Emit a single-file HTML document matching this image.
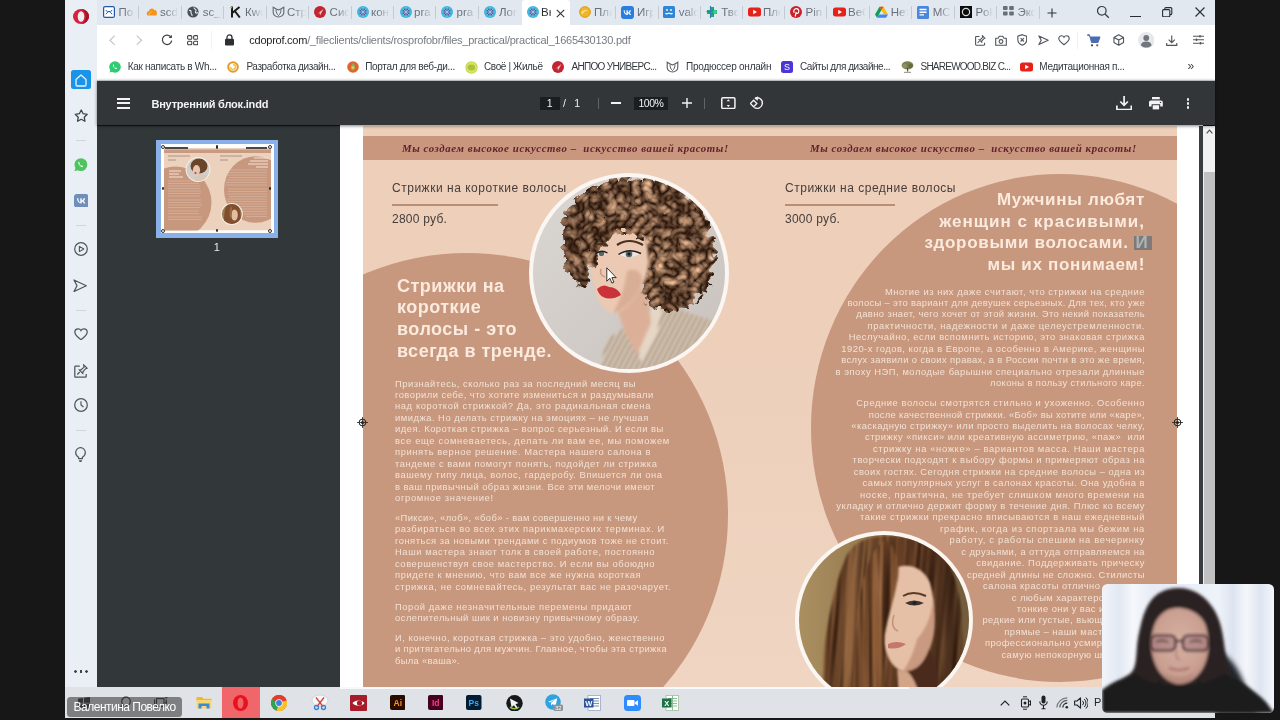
<!DOCTYPE html>
<html lang="ru">
<head>
<meta charset="utf-8">
<title>Внутренний блок.indd</title>
<style>
*{box-sizing:border-box;margin:0;padding:0}
html,body{width:1280px;height:720px;overflow:hidden;background:#171717;font-family:"Liberation Sans",sans-serif;}
#root{position:absolute;left:0;top:0;width:1280px;height:720px;overflow:hidden;background:#171717;filter:blur(0.45px);}
.abs{position:absolute}
/* browser chrome */
#tabbar{position:absolute;left:65px;top:0;width:1150px;height:25px;background:#e1e8f0;}
#opside{position:absolute;left:65px;top:0;width:32px;height:688px;background:#e9eff4;}
#addr{position:absolute;left:97px;top:25px;width:1118px;height:29px;background:#fff;}
#bmk{position:absolute;left:97px;top:54px;width:1118px;height:26px;background:#fff;}
.tab{position:absolute;top:0;height:25px;font-size:11px;color:#5a6270;white-space:nowrap;overflow:hidden}
.tab .ic{position:absolute;left:3px;top:5px;width:14px;height:14px;border-radius:3px}
.tab .tx{position:absolute;left:20px;top:6px;width:17px;overflow:hidden;-webkit-mask-image:linear-gradient(90deg,#000 55%,transparent);}
.tsep{position:absolute;top:6px;width:1px;height:13px;background:#c3cad4}
.bm{position:absolute;top:0;height:26px;font-size:10px;color:#34393f;white-space:nowrap;line-height:25px}
.bmi{position:absolute;top:6px;width:13px;height:13px;border-radius:50%}
/* pdf viewer */
#pdfbar{position:absolute;left:97px;top:80px;width:1118px;height:45px;background:#323639;box-shadow:0 1px 3px rgba(0,0,0,.5);z-index:5}
#pdfside{position:absolute;left:97px;top:126px;width:243px;height:562px;background:#323839;}
#view{position:absolute;left:340px;top:125px;width:863px;height:563px;background:#fff;overflow:hidden}
#vshadow{position:absolute;left:1199px;top:126px;width:4px;height:562px;background:#3a3d40}
#scroll{position:absolute;left:1203px;top:126px;width:12px;height:562px;background:#f1f1f1}
#taskbar{position:absolute;left:65px;top:687px;width:1150px;height:31.300px;background:#dfe3e7;}

/* page art : origin global (361,126) */
#art{position:absolute;left:21px;top:1px;width:816px;height:562px;background:linear-gradient(180deg,#edcfba 0%,#edcfba 35%,#efd5c2 100%);overflow:hidden}
#art .band{position:absolute;left:0;top:9.600px;width:816px;height:24.700px;background:#c8977e}
#art .circ{position:absolute;border-radius:50%;background:#c8987e}
.script{position:absolute;top:10.300px;height:25px;line-height:25px;font-family:"Liberation Serif",serif;font-style:italic;font-weight:bold;font-size:10.800px;color:#64202f;white-space:nowrap;letter-spacing:.61px;text-align:left}
.svc{position:absolute;font-size:12px;color:#463d3a;white-space:nowrap;letter-spacing:.52px}
.rule{position:absolute;height:2.300px;background:#b98d76}
.h{position:absolute;font-weight:bold;font-size:18px;line-height:21.65px;color:#fbeade;white-space:nowrap;letter-spacing:.5px}
.h.pr{font-size:17px;letter-spacing:.7px}
.p{position:absolute;font-size:9.4px;line-height:11.45px;color:#f3e1d4;white-space:nowrap;letter-spacing:.52px}
.p.pr{letter-spacing:.44px;overflow:hidden}
.p div{height:11.45px}
.p .gap{height:8.55px}
.pr{text-align:right}
.reg{position:absolute;width:11px;height:11px}
</style>
</head>
<body>
<div id="root">
  <div id="tabbar">
<div class="abs" style="left:457.300px;top:0;width:48px;height:25px;background:#fff;border-radius:3px 3px 0 0"></div>
<div class="abs" style="left:37.7px;top:6px;width:13px;height:13px;line-height:0"><svg width="12" height="12" viewBox="0 0 12 12"><rect x=".6" y=".6" width="10.8" height="10.8" rx="1.5" fill="#fff" stroke="#2458a6" stroke-width="1.2"/><path d="M2.8 4l2 2.2L6 5l1.2 1.2 2-2.2M2.8 8.2L4.8 6.2M9.2 8.2L7.2 6.2" stroke="#2458a6" stroke-width="1" fill="none"/></svg></div>
<div class="abs" style="left:53.4px;top:5px;width:17px;height:15px;line-height:15px;font-size:11.5px;color:#69707b;overflow:hidden;white-space:nowrap;-webkit-mask-image:linear-gradient(90deg,#000 35%,rgba(0,0,0,0) 100%);">По</div>
<div class="tsep" style="left:73.3px"></div>
<div class="abs" style="left:80.8px;top:6px;width:13px;height:13px;line-height:0"><svg width="12" height="12" viewBox="0 0 12 12"><path d="M1.5 9.5C0 8 1 5.2 3 5c.3-2.4 3.6-3.4 5-1.200C10.500 4 11.800 6.500 10.500 9.500Z" fill="#f7941e"/><path d="M3.500 9.500c-1-1.500 0-3.500 2-3.500" stroke="#fbb65a" stroke-width="1" fill="none"/></svg></div>
<div class="abs" style="left:95.0px;top:5px;width:18px;height:15px;line-height:15px;font-size:11.5px;color:#69707b;overflow:hidden;white-space:nowrap;-webkit-mask-image:linear-gradient(90deg,#000 35%,rgba(0,0,0,0) 100%);">scd</div>
<div class="tsep" style="left:116.3px"></div>
<div class="abs" style="left:122.4px;top:6px;width:13px;height:13px;line-height:0"><svg width="12" height="12" viewBox="0 0 12 12"><circle cx="6" cy="6" r="5.6" fill="#4a4f55"/><path d="M2 4.500c1.500-.5 2.500.5 2 1.800S5.500 8 5 10M7 1.500c0 1.500 1.500 1.500 2 2.500s-1 1.500-.5 2.500 2 .5 2.500 0" stroke="#e8ebef" stroke-width="1.100" fill="none"/></svg></div>
<div class="abs" style="left:137.7px;top:5px;width:19px;height:15px;line-height:15px;font-size:11.5px;color:#69707b;overflow:hidden;white-space:nowrap;-webkit-mask-image:linear-gradient(90deg,#000 35%,rgba(0,0,0,0) 100%);">sc_c</div>
<div class="tsep" style="left:158.4px"></div>
<div class="abs" style="left:164.0px;top:6px;width:13px;height:13px;line-height:0"><svg width="12" height="12" viewBox="0 0 12 12"><path d="M3 .5v11M10.500 1L3.500 6.800M5.800 5l5 6.500" stroke="#1b1b1b" stroke-width="2" fill="none"/><path d="M.5 1h3l-1.500 2z" fill="#f0a020"/></svg></div>
<div class="abs" style="left:180.0px;top:5px;width:18px;height:15px;line-height:15px;font-size:11.5px;color:#69707b;overflow:hidden;white-space:nowrap;-webkit-mask-image:linear-gradient(90deg,#000 35%,rgba(0,0,0,0) 100%);">Кwo</div>
<div class="tsep" style="left:201.0px"></div>
<div class="abs" style="left:206.7px;top:6px;width:13px;height:13px;line-height:0"><svg width="13" height="12" viewBox="0 0 13 12"><path d="M1.200 1.200l2.600 1.600L6.500 4l2.700-1.200 2.600-1.600v5.400c0 2.400-2.400 4.400-5.300 4.400S1.200 9 1.200 6.600Z" fill="none" stroke="#60666e" stroke-width="1.100"/><path d="M4 3.500c0 3 1.200 5 2.500 6 1.300-1 2.500-3 2.500-6" fill="none" stroke="#60666e" stroke-width="1"/></svg></div>
<div class="abs" style="left:222.0px;top:5px;width:19px;height:15px;line-height:15px;font-size:11.5px;color:#69707b;overflow:hidden;white-space:nowrap;-webkit-mask-image:linear-gradient(90deg,#000 35%,rgba(0,0,0,0) 100%);">Стр</div>
<div class="tsep" style="left:243.3px"></div>
<div class="abs" style="left:249.0px;top:6px;width:13px;height:13px;line-height:0"><svg width="12" height="12" viewBox="0 0 12 12"><circle cx="6" cy="6" r="6" fill="#c2252f"/><path d="M2.500 8.500L9.500 3 6 9.500 5.500 6.500Z" fill="#f5c9cc"/></svg></div>
<div class="abs" style="left:264.6px;top:5px;width:19px;height:15px;line-height:15px;font-size:11.5px;color:#69707b;overflow:hidden;white-space:nowrap;-webkit-mask-image:linear-gradient(90deg,#000 35%,rgba(0,0,0,0) 100%);">Сис</div>
<div class="tsep" style="left:285.5px"></div>
<div class="abs" style="left:292.0px;top:6px;width:13px;height:13px;line-height:0"><svg width="12" height="12" viewBox="0 0 12 12"><circle cx="6" cy="6" r="6" fill="#3bb6dd"/><circle cx="6" cy="6" r="3.6" fill="#5a5596"/><path d="M6 1v10M1.5 6h9M2.8 2.8l6.4 6.4M9.2 2.8L2.8 9.2" stroke="#9adcf0" stroke-width=".7"/></svg></div>
<div class="abs" style="left:306.0px;top:5px;width:19px;height:15px;line-height:15px;font-size:11.5px;color:#69707b;overflow:hidden;white-space:nowrap;-webkit-mask-image:linear-gradient(90deg,#000 35%,rgba(0,0,0,0) 100%);">кон</div>
<div class="tsep" style="left:327.7px"></div>
<div class="abs" style="left:334.8px;top:6px;width:13px;height:13px;line-height:0"><svg width="12" height="12" viewBox="0 0 12 12"><circle cx="6" cy="6" r="6" fill="#3bb6dd"/><circle cx="6" cy="6" r="3.6" fill="#5a5596"/><path d="M6 1v10M1.5 6h9M2.8 2.8l6.4 6.4M9.2 2.8L2.8 9.2" stroke="#9adcf0" stroke-width=".7"/></svg></div>
<div class="abs" style="left:349.0px;top:5px;width:19px;height:15px;line-height:15px;font-size:11.5px;color:#69707b;overflow:hidden;white-space:nowrap;-webkit-mask-image:linear-gradient(90deg,#000 35%,rgba(0,0,0,0) 100%);">pra</div>
<div class="tsep" style="left:370.3px"></div>
<div class="abs" style="left:376.4px;top:6px;width:13px;height:13px;line-height:0"><svg width="12" height="12" viewBox="0 0 12 12"><circle cx="6" cy="6" r="6" fill="#3bb6dd"/><circle cx="6" cy="6" r="3.6" fill="#5a5596"/><path d="M6 1v10M1.5 6h9M2.8 2.8l6.4 6.4M9.2 2.8L2.8 9.2" stroke="#9adcf0" stroke-width=".7"/></svg></div>
<div class="abs" style="left:391.6px;top:5px;width:19px;height:15px;line-height:15px;font-size:11.5px;color:#69707b;overflow:hidden;white-space:nowrap;-webkit-mask-image:linear-gradient(90deg,#000 35%,rgba(0,0,0,0) 100%);">pra</div>
<div class="tsep" style="left:412.6px"></div>
<div class="abs" style="left:419.0px;top:6px;width:13px;height:13px;line-height:0"><svg width="12" height="12" viewBox="0 0 12 12"><circle cx="6" cy="6" r="6" fill="#3bb6dd"/><circle cx="6" cy="6" r="3.6" fill="#5a5596"/><path d="M6 1v10M1.5 6h9M2.8 2.8l6.4 6.4M9.2 2.8L2.8 9.2" stroke="#9adcf0" stroke-width=".7"/></svg></div>
<div class="abs" style="left:434.0px;top:5px;width:18px;height:15px;line-height:15px;font-size:11.5px;color:#69707b;overflow:hidden;white-space:nowrap;-webkit-mask-image:linear-gradient(90deg,#000 35%,rgba(0,0,0,0) 100%);">Лог</div>
<div class="abs" style="left:461.7px;top:6px;width:13px;height:13px;line-height:0"><svg width="12" height="12" viewBox="0 0 12 12"><circle cx="6" cy="6" r="6" fill="#3bb6dd"/><circle cx="6" cy="6" r="3.6" fill="#5a5596"/><path d="M6 1v10M1.5 6h9M2.8 2.8l6.4 6.4M9.2 2.8L2.8 9.2" stroke="#9adcf0" stroke-width=".7"/></svg></div>
<div class="abs" style="left:476.0px;top:5px;width:10px;height:15px;line-height:15px;font-size:11.5px;color:#2b2f33;overflow:hidden;white-space:nowrap;">Вн</div>
<div class="abs" style="left:513.5px;top:6px;width:13px;height:13px;line-height:0"><svg width="12" height="12" viewBox="0 0 12 12"><circle cx="6" cy="6" r="5.800" fill="#f0b429"/><path d="M2 7c1-3 5-4 8-2-2-.5-5 0-6.500 3.500Z" fill="#fbe08a"/><circle cx="6" cy="6" r="5.300" fill="none" stroke="#d99a1a" stroke-width=".8"/></svg></div>
<div class="abs" style="left:529.0px;top:5px;width:18px;height:15px;line-height:15px;font-size:11.5px;color:#69707b;overflow:hidden;white-space:nowrap;-webkit-mask-image:linear-gradient(90deg,#000 35%,rgba(0,0,0,0) 100%);">Пла</div>
<div class="tsep" style="left:550.0px"></div>
<div class="abs" style="left:555.8px;top:6px;width:13px;height:13px;line-height:0"><svg width="13" height="13" viewBox="0 0 13 13"><rect width="13" height="13" rx="3" fill="#2a7de1"/><path d="M2.600 4.200c.1 3 1.600 4.800 4 4.800h.2V7.300c.9.100 1.600.8 1.900 1.700h1.400c-.3-1.200-1.200-1.900-1.700-2.200.5-.3 1.300-1.100 1.500-2.600H8.600c-.3 1.100-1 2-1.800 2.100V4.200H5.500v3.600c-.8-.2-1.700-1.200-1.800-3.600Z" fill="#fff"/></svg></div>
<div class="abs" style="left:572.0px;top:5px;width:17px;height:15px;line-height:15px;font-size:11.5px;color:#69707b;overflow:hidden;white-space:nowrap;-webkit-mask-image:linear-gradient(90deg,#000 35%,rgba(0,0,0,0) 100%);">Игр</div>
<div class="tsep" style="left:592.7px"></div>
<div class="abs" style="left:598.4px;top:6px;width:13px;height:13px;line-height:0"><svg width="12" height="12" viewBox="0 0 12 12"><rect width="12" height="12" rx="1.500" fill="#2f86d6"/><path d="M2.500 7.200c1.200 1.500 2.400 0 3.500 0s2.300 1.500 3.500 0" stroke="#fff" stroke-width="1.200" fill="none"/><circle cx="4" cy="4" r=".9" fill="#fff"/><circle cx="8" cy="4" r=".9" fill="#fff"/></svg></div>
<div class="abs" style="left:613.7px;top:5px;width:19px;height:15px;line-height:15px;font-size:11.5px;color:#69707b;overflow:hidden;white-space:nowrap;-webkit-mask-image:linear-gradient(90deg,#000 35%,rgba(0,0,0,0) 100%);">valc</div>
<div class="tsep" style="left:635.0px"></div>
<div class="abs" style="left:640.7px;top:6px;width:13px;height:13px;line-height:0"><svg width="13" height="12" viewBox="0 0 13 12"><path d="M4 1h4v3h3v4H8v3H4V8H1V4h3Z" fill="#1fa971"/><path d="M4.500 0v12M.5 5.500h5M7.500 3v6" stroke="#2c7fb8" stroke-width="1.200"/><circle cx="9" cy="6" r="2" fill="#3ccf8e"/></svg></div>
<div class="abs" style="left:656.3px;top:5px;width:18px;height:15px;line-height:15px;font-size:11.5px;color:#69707b;overflow:hidden;white-space:nowrap;-webkit-mask-image:linear-gradient(90deg,#000 35%,rgba(0,0,0,0) 100%);">Тво</div>
<div class="tsep" style="left:677.3px"></div>
<div class="abs" style="left:683.3px;top:6px;width:13px;height:13px;line-height:0"><svg width="13" height="12" viewBox="0 0 13 12"><rect x="0" y="1.500" width="13" height="9" rx="2.500" fill="#e62117"/><path d="M5.200 3.800v4.400L9 6Z" fill="#fff"/></svg></div>
<div class="abs" style="left:698.0px;top:5px;width:18px;height:15px;line-height:15px;font-size:11.5px;color:#69707b;overflow:hidden;white-space:nowrap;-webkit-mask-image:linear-gradient(90deg,#000 35%,rgba(0,0,0,0) 100%);">Пле</div>
<div class="tsep" style="left:719.3px"></div>
<div class="abs" style="left:725.4px;top:6px;width:13px;height:13px;line-height:0"><svg width="12" height="12" viewBox="0 0 12 12"><circle cx="6" cy="6" r="6" fill="#cb2027"/><path d="M5.200 10.500l1-4.500M4.200 6.800C3 4.500 4.500 2.600 6.300 2.600s3 1.600 2.300 3.500c-.6 1.600-2 1.700-2.500.800" stroke="#fff" stroke-width="1.200" fill="none"/></svg></div>
<div class="abs" style="left:740.6px;top:5px;width:18px;height:15px;line-height:15px;font-size:11.5px;color:#69707b;overflow:hidden;white-space:nowrap;-webkit-mask-image:linear-gradient(90deg,#000 35%,rgba(0,0,0,0) 100%);">Pin</div>
<div class="tsep" style="left:760.5px"></div>
<div class="abs" style="left:767.6px;top:6px;width:13px;height:13px;line-height:0"><svg width="13" height="12" viewBox="0 0 13 12"><rect x="0" y="1.500" width="13" height="9" rx="2.500" fill="#e62117"/><path d="M5.200 3.800v4.400L9 6Z" fill="#fff"/></svg></div>
<div class="abs" style="left:783.0px;top:5px;width:18px;height:15px;line-height:15px;font-size:11.5px;color:#69707b;overflow:hidden;white-space:nowrap;-webkit-mask-image:linear-gradient(90deg,#000 35%,rgba(0,0,0,0) 100%);">Веб</div>
<div class="tsep" style="left:803.7px"></div>
<div class="abs" style="left:810.0px;top:6px;width:13px;height:13px;line-height:0"><svg width="13" height="12" viewBox="0 0 13 12"><path d="M4.500.8h4L13 8.500H9Z" fill="#fbbc04"/><path d="M4.500.8L0 8.500l2 3.200 4.500-7.600Z" fill="#0f9d58"/><path d="M2 11.700h9l2-3.200H4Z" fill="#4285f4"/><path d="M4.500.8l2 3.300 2-3.300Z" fill="#ea4335"/></svg></div>
<div class="abs" style="left:825.7px;top:5px;width:17px;height:15px;line-height:15px;font-size:11.5px;color:#69707b;overflow:hidden;white-space:nowrap;-webkit-mask-image:linear-gradient(90deg,#000 35%,rgba(0,0,0,0) 100%);">Нет</div>
<div class="tsep" style="left:846.4px"></div>
<div class="abs" style="left:852.0px;top:6px;width:13px;height:13px;line-height:0"><svg width="12" height="13" viewBox="0 0 12 13"><rect width="12" height="13" rx="1.500" fill="#4a86d9"/><path d="M2.500 3.500h7M2.500 6.200h7M2.500 8.900h4.500" stroke="#fff" stroke-width="1.400"/></svg></div>
<div class="abs" style="left:867.7px;top:5px;width:18px;height:15px;line-height:15px;font-size:11.5px;color:#69707b;overflow:hidden;white-space:nowrap;-webkit-mask-image:linear-gradient(90deg,#000 35%,rgba(0,0,0,0) 100%);">МС</div>
<div class="tsep" style="left:889.0px"></div>
<div class="abs" style="left:894.7px;top:6px;width:13px;height:13px;line-height:0"><svg width="12" height="12" viewBox="0 0 12 12"><rect width="12" height="12" fill="#0c0c0c"/><circle cx="6" cy="6" r="3.600" fill="none" stroke="#d8dce0" stroke-width="1.200"/></svg></div>
<div class="abs" style="left:910.4px;top:5px;width:18px;height:15px;line-height:15px;font-size:11.5px;color:#69707b;overflow:hidden;white-space:nowrap;-webkit-mask-image:linear-gradient(90deg,#000 35%,rgba(0,0,0,0) 100%);">Pok</div>
<div class="tsep" style="left:931.3px"></div>
<div class="abs" style="left:937.8px;top:6px;width:13px;height:13px;line-height:0"><svg width="11" height="10" viewBox="0 0 11 10"><rect x="0" y="0" width="4.600" height="4" rx=".8" fill="#6a6f76"/><rect x="6.200" y="0" width="4.600" height="4" rx=".8" fill="#6a6f76"/><rect x="0" y="5.600" width="4.600" height="4" rx=".8" fill="#6a6f76"/><rect x="6.200" y="5.600" width="4.600" height="4" rx=".8" fill="#6a6f76"/></svg></div>
<div class="abs" style="left:952.4px;top:5px;width:18px;height:15px;line-height:15px;font-size:11.5px;color:#69707b;overflow:hidden;white-space:nowrap;-webkit-mask-image:linear-gradient(90deg,#000 35%,rgba(0,0,0,0) 100%);">Экс</div>
<div class="tsep" style="left:974.4px"></div>
<div class="tsep" style="left:761px"></div>
<svg class="abs" style="left:491px;top:8.500px" width="9" height="9" viewBox="0 0 9 9"><path d="M.8.8l7.400 7.400M8.200.8L.8 8.200" stroke="#333" stroke-width="1.100"/></svg>
<svg class="abs" style="left:981.500px;top:8px" width="10" height="10" viewBox="0 0 10 10"><path d="M5 .5v9M.5 5h9" stroke="#333" stroke-width="1.100"/></svg>
<svg class="abs" style="left:1031px;top:4.500px" width="14" height="14" viewBox="0 0 14 14"><circle cx="5.800" cy="5.800" r="4.300" fill="none" stroke="#3a3d42" stroke-width="1.200"/><path d="M9 9l3.800 3.800" stroke="#3a3d42" stroke-width="1.300"/></svg>
<div class="abs" style="left:1065px;top:15.600px;width:10.500px;height:1.200px;background:#2a2c30"></div>
<svg class="abs" style="left:1097px;top:6.800px" width="10.500" height="10.500" viewBox="0 0 10.500 10.500"><rect x=".6" y="2.600" width="7.200" height="7.200" rx="1" fill="none" stroke="#2a2c30" stroke-width="1.100"/><path d="M2.800 2.500V1.600a1 1 0 0 1 1-1h5a1 1 0 0 1 1 1v5a1 1 0 0 1-1 1H8" fill="none" stroke="#2a2c30" stroke-width="1.100"/></svg>
<svg class="abs" style="left:1129.500px;top:7px" width="10" height="10" viewBox="0 0 10 10"><path d="M.5.5l9 9M9.500.5l-9 9" stroke="#2a2c30" stroke-width="1.100"/></svg>
</div>
  <div id="opside">
<svg class="abs" style="left:7.6px;top:8.5px" width="16" height="15" viewBox="0 0 16 15"><ellipse cx="8" cy="7.500" rx="8" ry="7.500" fill="#d8203a"/><ellipse cx="8" cy="7.500" rx="3.300" ry="5.300" fill="#e9eff4"/><path d="M8 0a8 7.500 0 0 1 0 15c3-1 4.800-4 4.800-7.500S11 1 8 0Z" fill="#a3132b"/></svg>
<div class="abs" style="left:6.0px;top:70.400px;width:19.500px;height:19px;border-radius:2.500px;background:#1a94ea"></div>
<svg class="abs" style="left:10.0px;top:73.5px" width="12" height="13" viewBox="0 0 12 13"><path d="M1 5.500L6 1l5 4.500v5.300a1.200 1.200 0 0 1-1.200 1.200H2.200A1.200 1.200 0 0 1 1 10.800Z" fill="none" stroke="#e8f6ff" stroke-width="1.300" stroke-linejoin="round"/></svg>
<svg class="abs" style="left:8.8px;top:108.8px" width="14.5" height="14" viewBox="0 0 14.5 14"><path d="M7.250 1l1.900 3.700 4.100.6-3 2.900.7 4.100-3.700-2-3.700 2 .7-4.100-3-2.900 4.100-.6Z" fill="none" stroke="#3f444a" stroke-width="1.300" stroke-linejoin="round"/></svg>
<div class="abs" style="left:11px;top:140.0px;width:9.500px;height:1px;background:#cfd5db"></div>
<div class="abs" style="left:11px;top:224.5px;width:9.500px;height:1px;background:#cfd5db"></div>
<div class="abs" style="left:11px;top:309.5px;width:9.500px;height:1px;background:#cfd5db"></div>
<div class="abs" style="left:11px;top:430.0px;width:9.500px;height:1px;background:#cfd5db"></div>
<svg class="abs" style="left:9.0px;top:158.3px" width="13.5" height="13.5" viewBox="0 0 13.5 13.5"><circle cx="6.900" cy="6.600" r="6.400" fill="#4ec45f"/><path d="M.4 13.300l1.300-3.800 2.600 2.500Z" fill="#4ec45f"/><path d="M4.700 3.800c-.6.600-.6 1.700.5 3.200s2.500 2.300 3.500 2l.3-1-1.400-.7-.5.500c-.7-.2-1.500-1-1.800-1.800l.5-.5-.5-1.500Z" fill="#fff"/></svg>
<svg class="abs" style="left:8.7px;top:193.8px" width="14.6" height="13.6" viewBox="0 0 14.6 13.6"><rect width="14.600" height="13.600" rx="3" fill="#6f8fba"/><path d="M3 4.300c.1 3.300 1.800 5.200 4.500 5.200h.2V7.600c1 .1 1.800.9 2.100 1.900h1.500c-.4-1.400-1.300-2.100-1.900-2.400.6-.3 1.400-1.200 1.700-2.800H9.700c-.3 1.200-1.100 2.200-2 2.300V4.300H6.300v4c-.9-.2-2-1.400-2-4Z" fill="#fff"/></svg>
<svg class="abs" style="left:8.5px;top:241.8px" width="14" height="14" viewBox="0 0 14 14"><circle cx="7" cy="7" r="6.300" fill="none" stroke="#4f555c" stroke-width="1.200"/><path d="M5.400 4.400v5.200L9.800 7Z" fill="none" stroke="#4f555c" stroke-width="1.100" stroke-linejoin="round"/></svg>
<svg class="abs" style="left:8.0px;top:278.6px" width="14.5" height="13.5" viewBox="0 0 14.5 13.5"><path d="M1 1l12.300 5.750L1 12.500l3-5.750Z" fill="none" stroke="#4f555c" stroke-width="1.250" stroke-linejoin="round"/></svg>
<svg class="abs" style="left:8.5px;top:327.5px" width="14" height="12.5" viewBox="0 0 14 12.5"><path d="M7 11.700C3.500 9.100.8 7 .8 4.300.8 2.300 2.300.8 4.100.8c1.300 0 2.400.7 2.900 1.800C7.500 1.500 8.600.8 9.900.8c1.800 0 3.300 1.500 3.300 3.500 0 2.700-2.700 4.800-6.200 7.400Z" fill="none" stroke="#4f555c" stroke-width="1.250"/></svg>
<svg class="abs" style="left:8.8px;top:363.5px" width="14" height="14" viewBox="0 0 14 14"><path d="M5.800 2.200H1.500a.7.700 0 0 0-.7.700v9.600a.7.700 0 0 0 .7.700h10a.7.700 0 0 0 .7-.7V10" fill="none" stroke="#4f555c" stroke-width="1.250"/><path d="M9.700.9l3.300 3.300-1.300.5-2.600 2.900-.3 1.800-3.400-3.400 1.800-.3 2.900-2.600Z M5.700 8L3.300 10.500" fill="none" stroke="#4f555c" stroke-width="1.200"/></svg>
<svg class="abs" style="left:8.5px;top:398.0px" width="14" height="14" viewBox="0 0 14 14"><circle cx="7" cy="7" r="6.300" fill="none" stroke="#4f555c" stroke-width="1.250"/><path d="M7 3.300V7l2.500 2" fill="none" stroke="#4f555c" stroke-width="1.200"/></svg>
<svg class="abs" style="left:10.0px;top:447.0px" width="11" height="15.5" viewBox="0 0 11 15.5"><path d="M3.600 10.300C1.700 9.200.7 7.600.7 5.500a4.800 4.800 0 0 1 9.600 0c0 2.100-1 3.700-2.900 4.800v1.400H3.600Z" fill="none" stroke="#4f555c" stroke-width="1.200"/><path d="M3.800 13.200h3.400l-.8 1.800H4.600Z" fill="#4f555c"/></svg>
<div class="abs" style="left:9px;top:669.500px;width:14px;height:3px;background:radial-gradient(circle at 1.500px 1.500px,#444 1.200px,transparent 1.500px),radial-gradient(circle at 7px 1.500px,#444 1.200px,transparent 1.500px),radial-gradient(circle at 12.500px 1.500px,#444 1.200px,transparent 1.500px)"></div>
</div>
  <div id="addr">
<svg class="abs" style="left:12.2px;top:10.0px" width="6.5" height="10.5" viewBox="0 0 6.5 10.5"><path d="M5.800.6L.9 5.250l4.900 4.650" fill="none" stroke="#c3c7cc" stroke-width="1.200"/></svg>
<svg class="abs" style="left:39.4px;top:10.0px" width="6.5" height="10.5" viewBox="0 0 6.5 10.5"><path d="M.7.6l4.900 4.650L.7 9.900" fill="none" stroke="#c3c7cc" stroke-width="1.200"/></svg>
<svg class="abs" style="left:63.5px;top:9.0px" width="12" height="12" viewBox="0 0 12 12"><path d="M10 3.200A4.700 4.700 0 1 0 10.700 6.600" fill="none" stroke="#3d4045" stroke-width="1.250"/><path d="M10.900.8v3.300H7.600Z" fill="#3d4045"/></svg>
<svg class="abs" style="left:89.6px;top:10.0px" width="11.5" height="10.5" viewBox="0 0 11.5 10.5"><rect x=".6" y=".6" width="4.200" height="3.600" rx="1" fill="none" stroke="#3d4045" stroke-width="1.050"/><rect x="6.600" y=".6" width="4.200" height="3.600" rx="1" fill="none" stroke="#3d4045" stroke-width="1.050"/><rect x=".6" y="6.200" width="4.200" height="3.600" rx="1" fill="none" stroke="#3d4045" stroke-width="1.050"/><rect x="6.600" y="6.200" width="4.200" height="3.600" rx="1" fill="none" stroke="#3d4045" stroke-width="1.050"/></svg>
<div class="abs" style="left:113.8px;top:6px;width:1px;height:18px;background:#f0f2f4"></div>
<svg class="abs" style="left:128.0px;top:9.0px" width="9" height="11.5" viewBox="0 0 9 11.5"><rect x="0" y="4.800" width="9" height="6.600" rx="1.200" fill="#2d2f33"/><path d="M2 5V3.400a2.500 2.500 0 0 1 5 0V5" fill="none" stroke="#2d2f33" stroke-width="1.300"/></svg>
<div class="abs" style="left:152.3px;top:7.500px;height:15px;line-height:15px;font-size:11px;white-space:nowrap;color:#767b82;letter-spacing:-.245px"><span style="color:#1c1e21">cdoprof.com</span>/_fileclients/clients/rosprofobr/files_practical/practical_1665430130.pdf</div>
<svg class="abs" style="left:878.0px;top:10.0px" width="10.5" height="10.5" viewBox="0 0 10.5 10.5"><path d="M4.500 1.500H1.200a.6.600 0 0 0-.6.600v7.500a.6.600 0 0 0 .6.600h7.800a.6.600 0 0 0 .6-.6V7.800" fill="none" stroke="#50555b" stroke-width="1.100"/><path d="M7.400.7l2.500 2.500-1 .4-2 2.200-.2 1.400-2.600-2.600 1.400-.2 2.200-2Z M4.400 6L2.600 7.900" fill="none" stroke="#50555b" stroke-width="1.050"/></svg>
<svg class="abs" style="left:898.0px;top:9.5px" width="12" height="11" viewBox="0 0 12 11"><path d="M.7 3.200h2.400l1.200-1.900h3.400l1.200 1.900h2.400v7H.7Z" fill="none" stroke="#50555b" stroke-width="1.100" stroke-linejoin="round"/><circle cx="6" cy="6.500" r="1.900" fill="none" stroke="#50555b" stroke-width="1.100"/></svg>
<svg class="abs" style="left:919.8px;top:9.3px" width="10.5" height="12" viewBox="0 0 10.5 12"><path d="M5.250.7l4.400 1.500v3.600c0 2.600-1.800 4.500-4.400 5.400C2.650 10.300.85 8.400.85 5.800V2.200Z" fill="none" stroke="#50555b" stroke-width="1.100"/><path d="M3.600 4.200l3.300 3.300M6.900 4.200L3.600 7.500" stroke="#50555b" stroke-width="1.100"/></svg>
<svg class="abs" style="left:940.5px;top:10.0px" width="11" height="10.5" viewBox="0 0 11 10.5"><path d="M.9.900l9.300 4.350L.9 9.600l2.300-4.350Z" fill="none" stroke="#50555b" stroke-width="1.150" stroke-linejoin="round"/></svg>
<svg class="abs" style="left:960.5px;top:10.0px" width="12" height="10.5" viewBox="0 0 12 10.5"><path d="M6 9.800C3 7.600.8 5.800.8 3.600.8 2 2 .8 3.500.8 4.600.8 5.500 1.400 6 2.300 6.500 1.400 7.400.8 8.500.8 10 .8 11.200 2 11.200 3.600c0 2.200-2.200 4-5.200 6.200Z" fill="none" stroke="#50555b" stroke-width="1.100"/></svg>
<div class="abs" style="left:979.6px;top:7px;width:1px;height:17px;background:#eef0f2"></div>
<svg class="abs" style="left:990.0px;top:8.5px" width="13.5" height="13" viewBox="0 0 13.5 13"><path d="M.5 1h2l2 7.500h6.500L13 3H3.300" fill="#4a6db3" stroke="#4a6db3" stroke-width="1" stroke-linejoin="round"/><path d="M.3 1h2.100" stroke="#4a6db3" stroke-width="1.300"/><circle cx="5" cy="11.300" r="1.100" fill="#3a3d42"/><circle cx="10.200" cy="11.300" r="1.100" fill="#c0392b"/></svg>
<svg class="abs" style="left:1016.0px;top:9.0px" width="11.5" height="12" viewBox="0 0 11.5 12"><path d="M5.750.7l4.800 2.700v5.200l-4.800 2.700L.95 8.600V3.400Z M.95 3.400l4.800 2.700 4.800-2.700M5.750 6.100v5.200" fill="none" stroke="#50555b" stroke-width="1.100" stroke-linejoin="round"/></svg>
<svg class="abs" style="left:1040.5px;top:6.5px" width="16.5" height="16.5" viewBox="0 0 16.5 16.5"><circle cx="8.250" cy="8.250" r="8.250" fill="#e6e8ec"/><circle cx="8.250" cy="6" r="2.900" fill="#70767c"/><path d="M2.800 13.200c.6-2.600 2.800-3.700 5.450-3.700s4.850 1.100 5.450 3.700c-1.400 1.500-3.300 2.300-5.450 2.300s-4.050-.8-5.450-2.300Z" fill="#70767c"/></svg>
<svg class="abs" style="left:1069.0px;top:9.5px" width="11.5" height="11" viewBox="0 0 11.5 11"><path d="M5.750.5v7M2.700 4.700l3.050 3 3.050-3M.7 8v2.300h10.100V8" fill="none" stroke="#50555b" stroke-width="1.150"/></svg>
<svg class="abs" style="left:1096.0px;top:10.0px" width="11" height="9.5" viewBox="0 0 11 9.5"><path d="M0 1.200h11M0 4.750h11M0 8.300h11" stroke="#50555b" stroke-width="1.100"/><path d="M7 0v2.400M3.500 3.550v2.400M7.500 7.100v2.400" stroke="#50555b" stroke-width="1.300"/></svg>
</div>
  <div id="bmk">
<div class="abs" style="left:12.0px;top:6.500px;line-height:0"><svg width="12" height="12" viewBox="0 0 12 12"><circle cx="6" cy="6" r="5.800" fill="#2ecc71"/><path d="M.5 11.500l1-3 2 2Z" fill="#2ecc71"/><path d="M4.200 3.500c-.5.500-.5 1.500.5 2.800s2.200 2 3 1.700l.3-.9-1.200-.6-.5.500c-.6-.2-1.300-.9-1.600-1.600l.5-.5-.5-1.300Z" fill="#fff"/></svg></div>
<div class="bm" style="left:30.7px;letter-spacing:-0.30px">Как написать в Wh...</div>
<div class="abs" style="left:130.0px;top:6.500px;line-height:0"><svg width="12" height="12" viewBox="0 0 12 12"><circle cx="6" cy="6" r="4.800" fill="none" stroke="#e79a23" stroke-width="2"/><path d="M6 3.500a2.500 2.500 0 1 1-2.500 2.500" fill="none" stroke="#f3c24b" stroke-width="1.500"/></svg></div>
<div class="bm" style="left:149.4px;letter-spacing:-0.40px">Разработка дизайн...</div>
<div class="abs" style="left:249.7px;top:6.500px;line-height:0"><svg width="12" height="12" viewBox="0 0 12 12"><circle cx="6" cy="6" r="5.800" fill="#e0652d"/><path d="M6 2c2 1.500 2.500 4 1.500 6.500C6.500 10 4.500 9.500 4 8 3.500 6 4.500 3.500 6 2Z" fill="#7fb069"/><circle cx="6" cy="6.500" r="1.500" fill="#f2c14e"/></svg></div>
<div class="bm" style="left:268.2px;letter-spacing:-0.32px">Портал для веб-ди...</div>
<div class="abs" style="left:368.3px;top:6.500px;line-height:0"><svg width="13" height="13" viewBox="0 0 13 13"><circle cx="6.500" cy="6.500" r="6.200" fill="#c8d94a"/><path d="M3 8V4.500M5 9V4M7 9V4M9 8.500V4.500" stroke="#8aa22a" stroke-width=".9"/><circle cx="6.500" cy="6.500" r="4.500" fill="none" stroke="#e4ee9a" stroke-width=".8"/></svg></div>
<div class="bm" style="left:387.0px;letter-spacing:-0.38px">Своё | Жильё</div>
<div class="abs" style="left:455.4px;top:6.500px;line-height:0"><svg width="12" height="12" viewBox="0 0 12 12"><circle cx="6" cy="6" r="6" fill="#c2252f"/><path d="M2.500 8.500L9.500 3 6 9.500 5.500 6.500Z" fill="#f5c9cc"/></svg></div>
<div class="bm" style="left:474.4px;letter-spacing:-0.67px">АНПОО УНИВЕРС...</div>
<div class="abs" style="left:569.0px;top:6.500px;line-height:0"><svg width="13" height="12" viewBox="0 0 13 12"><path d="M1.200 1.200l2.600 1.600L6.500 4l2.700-1.200 2.600-1.600v5.400c0 2.400-2.400 4.400-5.300 4.400S1.200 9 1.200 6.600Z" fill="none" stroke="#555a61" stroke-width="1.100"/><path d="M4 3.500c0 3 1.200 5 2.500 6 1.300-1 2.500-3 2.500-6" fill="none" stroke="#555a61" stroke-width="1"/></svg></div>
<div class="bm" style="left:589.0px;letter-spacing:-0.23px">Продюссер онлайн</div>
<div class="abs" style="left:684.0px;top:6.500px;line-height:0"><svg width="12" height="12" viewBox="0 0 12 12"><rect width="12" height="12" rx="2.500" fill="#4b35d6"/><text x="6" y="9.200" font-family="Liberation Sans" font-size="9" fill="#fff" text-anchor="middle">S</text></svg></div>
<div class="bm" style="left:703.0px;letter-spacing:-0.47px">Сайты для дизайне...</div>
<div class="abs" style="left:803.5px;top:6.500px;line-height:0"><svg width="13" height="12" viewBox="0 0 13 12"><ellipse cx="6.500" cy="4.300" rx="5.800" ry="4" fill="#7a7f52"/><circle cx="3.500" cy="5" r="2.300" fill="#8d9163"/><circle cx="9.500" cy="5" r="2.300" fill="#666b42"/><path d="M6 7h1.200v3.500H6Z" fill="#5b4a36"/><path d="M3 11.300h7" stroke="#8a8a78" stroke-width="1"/></svg></div>
<div class="bm" style="left:823.5px;letter-spacing:-0.76px">SHAREWOOD.BIZ C...</div>
<div class="abs" style="left:922.6px;top:6.500px;line-height:0"><svg width="13" height="12" viewBox="0 0 13 12"><rect x="0" y="1.500" width="13" height="9" rx="2.500" fill="#e62117"/><path d="M5.200 3.800v4.400L9 6Z" fill="#fff"/></svg></div>
<div class="bm" style="left:942.3px;letter-spacing:-0.30px">Медитационная п...</div>
<div class="abs" style="left:1090.5px;top:5px;font-size:12px;color:#444;line-height:14px">»</div>
</div>
  <div id="pdfbar">
<div class="abs" style="left:0;top:0;width:1118px;height:1px;background:#b9bcbf"></div>
<div class="abs" style="left:20.3px;top:17.9px;width:13.200px;height:1.700px;background:#f1f3f4"></div>
<div class="abs" style="left:20.3px;top:22.4px;width:13.200px;height:1.700px;background:#f1f3f4"></div>
<div class="abs" style="left:20.3px;top:26.9px;width:13.200px;height:1.700px;background:#f1f3f4"></div>
<div class="abs" style="left:54.4px;top:16.500px;height:15px;line-height:15px;font-size:11px;font-weight:bold;color:#f1f3f4;white-space:nowrap;letter-spacing:-.2px">Внутренний блок.indd</div>
<div class="abs" style="left:442.9px;top:17.300px;width:19.700px;height:12.700px;background:#1b1e20;color:#f1f3f4;font-size:10.500px;line-height:12.700px;text-align:center">1</div>
<div class="abs" style="left:466.0px;top:17.300px;height:12.700px;color:#f1f3f4;font-size:10.500px;line-height:12.700px;white-space:nowrap;letter-spacing:.8px">/&nbsp;&nbsp;1</div>
<div class="abs" style="left:501.0px;top:17.500px;width:1px;height:11px;background:#5f6368"></div>
<div class="abs" style="left:514.4px;top:22.400px;width:9.600px;height:1.400px;background:#f1f3f4"></div>
<div class="abs" style="left:536.7px;top:17.300px;width:34.600px;height:12.700px;background:#1b1e20;color:#f1f3f4;font-size:10.500px;line-height:12.700px;text-align:center;letter-spacing:-.45px">100%</div>
<svg class="abs" style="left:584.5px;top:18.3px" width="10" height="10" viewBox="0 0 10 10"><path d="M5 0v10M0 5h10" stroke="#f1f3f4" stroke-width="1.400"/></svg>
<div class="abs" style="left:607.4px;top:17.500px;width:1px;height:11px;background:#5f6368"></div>
<svg class="abs" style="left:624.0px;top:17.3px" width="14.7" height="12.2" viewBox="0 0 14.7 12.2"><rect x=".75" y=".75" width="13.200" height="10.700" rx="1.200" fill="none" stroke="#f1f3f4" stroke-width="1.500"/><path d="M7.350 2.300l1.700 1.900H5.650ZM7.350 9.900l1.700-1.900H5.650Z" fill="#f1f3f4"/></svg>
<svg class="abs" style="left:653.0px;top:16.0px" width="14.5" height="14.5" viewBox="0 0 14.5 14.5"><path d="M5 2.200A5.300 5.300 0 1 1 4.200 11.500" fill="none" stroke="#f1f3f4" stroke-width="1.400"/><path d="M7.800.2L4.400 2.500l3.400 2.300Z" fill="#f1f3f4"/><rect x="1.300" y="5.200" width="4.600" height="4.600" transform="rotate(45 3.600 7.500)" fill="none" stroke="#f1f3f4" stroke-width="1.300"/></svg>
<svg class="abs" style="left:1019.0px;top:15.7px" width="16.2" height="14.5" viewBox="0 0 16.2 14.5"><path d="M8.100 0v9M4.300 5.500l3.800 3.800 3.800-3.800" fill="none" stroke="#f1f3f4" stroke-width="1.700"/><path d="M.9 9.500v4h14.400v-4" fill="none" stroke="#f1f3f4" stroke-width="1.700"/></svg>
<svg class="abs" style="left:1052.4px;top:17.2px" width="13.8" height="12.4" viewBox="0 0 13.8 12.4"><path d="M3 0h7.800v2.300H3Z" fill="#f1f3f4"/><path d="M1.800 3.400h10.200a1.800 1.800 0 0 1 1.800 1.800v4.300h-2.600V7.200H2.600v2.300H0V5.200a1.800 1.800 0 0 1 1.800-1.800Z" fill="#f1f3f4"/><path d="M3.700 8.200h6.400v4.200H3.700Z" fill="#f1f3f4"/><circle cx="11.500" cy="5.400" r=".7" fill="#323639"/></svg>
<div class="abs" style="left:1089.7px;top:18.0px;width:2.600px;height:2.600px;border-radius:50%;background:#f1f3f4"></div>
<div class="abs" style="left:1089.7px;top:22.1px;width:2.600px;height:2.600px;border-radius:50%;background:#f1f3f4"></div>
<div class="abs" style="left:1089.7px;top:26.0px;width:2.600px;height:2.600px;border-radius:50%;background:#f1f3f4"></div>
</div>
  <div id="pdfside">
<div class="abs" style="left:58.9px;top:13.9px;width:121.700px;height:98.100px;background:#8ab0ea"></div>
<div class="abs" style="left:63.8px;top:18.4px;width:112.800px;height:88.600px;background:#fdfdfd"></div>
<svg class="abs" style="left:66.5px;top:22.0px" width="107" height="82.500" viewBox="0 0 107 82.500">
<defs><clipPath id="tc"><rect width="107" height="82.500"/></clipPath><clipPath id="tp1"><circle cx="34" cy="21.500" r="11.400"/></clipPath><clipPath id="tp2"><circle cx="67.800" cy="66" r="10"/></clipPath><filter id="tb"><feGaussianBlur stdDeviation=".5"/></filter></defs>
<g clip-path="url(#tc)"><rect width="107" height="82.500" fill="#ecd1bd"/>
<rect y="1.500" width="107" height="3.500" fill="#c89a81"/>
<circle cx="11.500" cy="54.500" r="36" fill="#c8987e"/>
<ellipse cx="91.500" cy="41.500" rx="31.500" ry="33.300" fill="#c8987e"/>
<g stroke="#e6cdbb" stroke-width=".7" opacity=".55">
<path d="M4 33h30M4 35.500h31M4 38h32M4 40.500h32M4 43h33M4 45.500h33M4 48h32M4 52h33M4 54.500h33M4 57h34M4 59.500h32M4 63h30M4 65.500h31M4 69h34M4 71.500h34"/>
<path d="M66 22h37M64 24.500h39M63 27h40M65 29.500h38M63 32h40M62 34.500h41M62 37h41M64 41h39M64 43.500h39M63 46h40M65 48.500h38M63 51h40M63 53.500h40M64 56h39M62 58.500h41M75 61h28M77 63.500h26M80 66h23M82 68.500h21"/>
</g>
<path d="M4 8h22M4 12h8M56 8h22M56 12h8" stroke="#9a8478" stroke-width=".8"/>
<path d="M5 23h12M5 26h10M5 29h14M90 10h14M86 13h18M84 16h20M92 19h12" stroke="#f3e4d8" stroke-width="1.100"/>
<circle cx="34" cy="21.500" r="12.400" fill="#f6efe8"/><circle cx="34" cy="21.500" r="11.400" fill="#d3cdc8"/>
<g clip-path="url(#tp1)"><g filter="url(#tb)"><ellipse cx="35" cy="18" rx="8.500" ry="7.500" fill="#6b452c"/><ellipse cx="32.500" cy="22" rx="3.600" ry="5" fill="#e8c5ad"/><path d="M30 30l8-4 6 3v4H31Z" fill="#d8c8b6"/><circle cx="31.500" cy="25" r="1" fill="#c93038"/></g></g>
<circle cx="67.800" cy="66" r="11" fill="#f6efe8"/><circle cx="67.800" cy="66" r="10" fill="#9a7e52"/>
<g clip-path="url(#tp2)"><g filter="url(#tb)"><path d="M62 58c3-4 10-4 13 1 2 5 2 11 1 17H60c0-7 0-13 2-18Z" fill="#80502e"/><ellipse cx="70.500" cy="67" rx="3.300" ry="5.500" fill="#e3bca2"/><path d="M67 58c2 3 1 8 0 13-2-3-2-9 0-13Z" fill="#9a6a40"/></g></g>
</g></svg>
<div class="abs" style="left:68.3px;top:20.5px;width:22.500px;height:2px;background:#4a4744"></div>
<div class="abs" style="left:148.6px;top:20.5px;width:21.700px;height:2px;background:#4a4744"></div>
<div class="abs" style="left:118.5px;top:19.3px;width:2.400px;height:3.400px;border-radius:50%;background:#222"></div>
<div class="abs" style="left:118.5px;top:102.6px;width:2.400px;height:3.400px;border-radius:50%;background:#222"></div>
<div class="abs" style="left:65.1px;top:60.8px;width:2.400px;height:3.400px;border-radius:50%;background:#222"></div>
<div class="abs" style="left:171.5px;top:60.8px;width:2.400px;height:3.400px;border-radius:50%;background:#222"></div>
<div class="abs" style="left:63.8px;top:18.8px;width:4px;height:4px;border-radius:50%;border:1px solid #333"></div>
<div class="abs" style="left:171.3px;top:18.8px;width:4px;height:4px;border-radius:50%;border:1px solid #333"></div>
<div class="abs" style="left:63.8px;top:102.5px;width:4px;height:4px;border-radius:50%;border:1px solid #333"></div>
<div class="abs" style="left:171.3px;top:102.5px;width:4px;height:4px;border-radius:50%;border:1px solid #333"></div>
<div class="abs" style="left:109.7px;top:115.0px;width:20px;text-align:center;font-size:11px;line-height:13px;color:#e8eaed">1</div>
</div>
  <div id="view">
<div id="art">
  <div class="band"></div>
  <div class="script" style="left:41px;width:327px">Мы создаем высокое искусство –&nbsp; искусство вашей красоты!</div>
  <div class="script" style="left:449px;width:327px">Мы создаем высокое искусство –&nbsp; искусство вашей красоты!</div>
  <div class="circ" style="left:-154.950px;top:127.250px;width:522.300px;height:522.300px"></div>
  <div class="circ" style="left:449.900px;top:48.100px;width:498.400px;height:507.900px"></div>
  <div class="svc" style="left:31px;top:55px">Стрижки на короткие волосы</div>
  <div class="rule" style="left:31px;top:77.700px;width:106px"></div>
  <div class="svc" style="left:31px;top:86px;letter-spacing:.25px">2800 руб.</div>
  <div class="svc" style="left:424px;top:55px">Стрижки на средние волосы</div>
  <div class="rule" style="left:424px;top:77.700px;width:110px"></div>
  <div class="svc" style="left:424px;top:86px;letter-spacing:.25px">3000 руб.</div>
  <div class="h" style="left:36px;top:149.700px">Стрижки на<br>короткие<br>волосы - это<br>всегда в тренде.</div>
  <div class="h pr" style="right:32px;top:62.9px">Мужчины любят<br><span style="letter-spacing:1.020px">женщин с красивыми,</span><br>здоровыми волосами. <span style="display:inline-block;vertical-align:baseline;height:14.500px;line-height:14.500px;width:18px;text-align:left;padding-left:1.500px;background:#7f7a77;color:#a9b6b8;margin-right:-7px;letter-spacing:0;position:relative;top:-.3px">И</span><br>мы их понимаем!</div>
  <div class="p" style="left:34px;top:251.600px"><div style="letter-spacing:0.517px">Признайтесь, сколько раз за последний месяц вы</div><div style="letter-spacing:0.471px">говорили себе, что хотите измениться и раздумывали</div><div style="letter-spacing:0.603px">над короткой стрижкой? Да, это радикальная смена</div><div style="letter-spacing:0.503px">имиджа. Но делать стрижку на эмоциях – не лучшая</div><div style="letter-spacing:0.494px">идея. Короткая стрижка – вопрос серьезный. И если вы</div><div style="letter-spacing:0.693px">все еще сомневаетесь, делать ли вам ее, мы поможем</div><div style="letter-spacing:0.593px">принять верное решение. Мастера нашего салона в</div><div style="letter-spacing:0.552px">тандеме с вами помогут понять, подойдет ли стрижка</div><div style="letter-spacing:0.563px">вашему типу лица, волос, гардеробу. Впишется ли она</div><div style="letter-spacing:0.468px">в ваш привычный образ жизни. Все эти мелочи имеют</div><div style="letter-spacing:0.679px">огромное значение!</div><div class="gap"></div><div style="letter-spacing:0.371px">«Пикси», «лоб», «боб» - вам совершенно ни к чему</div><div style="letter-spacing:0.607px">разбираться во всех этих парикмахерских терминах. И</div><div style="letter-spacing:0.503px">гоняться за новыми трендами с подиумов тоже не стоит.</div><div style="letter-spacing:0.576px">Наши мастера знают толк в своей работе, постоянно</div><div style="letter-spacing:0.574px">совершенствуя свое мастерство. И если вы обоюдно</div><div style="letter-spacing:0.572px">придете к мнению, что вам все же нужна короткая</div><div style="letter-spacing:0.581px">стрижка, не сомневайтесь, результат вас не разочарует.</div><div class="gap"></div><div style="letter-spacing:0.578px">Порой даже незначительные перемены придают</div><div style="letter-spacing:0.487px">ослепительный шик и новизну привычному образу.</div><div class="gap"></div><div style="letter-spacing:0.516px">И, конечно, короткая стрижка – это удобно, женственно</div><div style="letter-spacing:0.373px">и притягательно для мужчин. Главное, чтобы эта стрижка</div><div style="letter-spacing:0.312px">была «ваша».</div></div>
  <div class="p pr" style="right:32px;top:159.6px"><div style="letter-spacing:0.556px">Многие из них даже считают, что стрижки на средние</div><div style="letter-spacing:0.336px">волосы – это вариант для девушек серьезных. Для тех, кто уже</div><div style="letter-spacing:0.418px">давно знает, чего хочет от этой жизни. Это некий показатель</div><div style="letter-spacing:0.632px">практичности, надежности и даже целеустремленности.</div><div style="letter-spacing:0.555px">Неслучайно, если вспомнить историю, это знаковая стрижка</div><div style="letter-spacing:0.493px">1920-х годов, когда в Европе, а особенно в Америке, женщины</div><div style="letter-spacing:0.391px">вслух заявили о своих правах, а в России почти в это же время,</div><div style="letter-spacing:0.528px">в эпоху НЭП, молодые барышни специально отрезали длинные</div><div style="letter-spacing:0.394px">локоны в пользу стильного каре.</div><div class="gap"></div><div style="letter-spacing:0.581px">Средние волосы смотрятся стильно и ухоженно. Особенно</div><div style="letter-spacing:0.347px">после качественной стрижки. «Боб» вы хотите или «каре»,</div><div style="letter-spacing:0.444px">«каскадную стрижку» или просто выделить на волосах челку,</div><div style="letter-spacing:0.508px">стрижку «пикси» или креативную ассиметрию, «паж»&nbsp; или</div><div style="letter-spacing:0.642px">стрижку на «ножке» – вариантов масса. Наши мастера</div><div style="letter-spacing:0.579px">творчески подходят к выбору формы и примеряют образ на</div><div style="letter-spacing:0.496px">своих гостях. Сегодня стрижки на средние волосы – одна из</div><div style="letter-spacing:0.493px">самых популярных услуг в салонах красоты. Она удобна в</div><div style="letter-spacing:0.692px">носке, практична, не требует слишком много времени на</div><div style="letter-spacing:0.506px">укладку и отлично держит форму в течение дня. Плюс ко всему</div><div style="letter-spacing:0.584px">такие стрижки прекрасно вписываются в наш ежедневный</div><div style="letter-spacing:0.707px">график, когда из спортзала мы бежим на</div><div style="letter-spacing:0.706px">работу, с работы спешим на вечеринку</div><div style="letter-spacing:0.453px">с друзьями, а оттуда отправляемся на</div><div style="letter-spacing:0.543px">свидание. Поддерживать прическу</div><div style="letter-spacing:0.477px">средней длины не сложно. Стилисты</div><div style="padding-right:44.500px;letter-spacing:0.489px">салона красоты отлично</div><div>с любым характером волос,</div><div style="position:relative;left:16px">тонкие они у вас или толстые,</div><div>редкие или густые, вьющиеся или</div><div style="position:relative;left:9px">прямые – наши мастера смогут</div><div>профессионально усмирить даже</div><div>самую непокорную шевелюру.</div></div>
  
  <!-- photo 1 : centre global (629,273) -> local (268,147) -->
  <svg class="abs" style="left:168px;top:47px" width="200" height="200" viewBox="0 0 200 200">
    <defs>
      <clipPath id="c1"><circle cx="100" cy="100" r="96"/></clipPath>
      <filter id="b1" x="-20%" y="-20%" width="140%" height="140%"><feGaussianBlur stdDeviation="1.4"/></filter>
      <filter id="b1s" x="-20%" y="-20%" width="140%" height="140%"><feGaussianBlur stdDeviation="0.7"/></filter>
      <filter id="curl" x="-10%" y="-10%" width="120%" height="120%" color-interpolation-filters="sRGB">
        <feTurbulence type="turbulence" baseFrequency="0.085" numOctaves="2" seed="7" result="n"/>
        <feDisplacementMap in="SourceGraphic" in2="n" scale="14" xChannelSelector="R" yChannelSelector="G" result="d"/>
        <feColorMatrix in="n" type="matrix" values="1.15 0 0 0 0.13  0.98 0 0 0 0.055  0.82 0 0 0 0.015  0 0 0 0 1" result="c"/>
        <feComposite in="c" in2="d" operator="in" result="h"/>
        <feGaussianBlur in="h" stdDeviation="0.7"/>
      </filter>
      <linearGradient id="bg1" x1="0" y1="0" x2="1" y2="1"><stop offset="0" stop-color="#dbd7d3"/><stop offset="1" stop-color="#c8c2bd"/></linearGradient>
      <pattern id="str" width="5" height="5" patternUnits="userSpaceOnUse" patternTransform="rotate(28)"><rect width="5" height="5" fill="#dccbb8"/><rect width="1.6" height="5" fill="#8f7c6c"/></pattern>
    </defs>
    <circle cx="100" cy="100" r="100" fill="#fbf6f1"/>
    <g clip-path="url(#c1)">
      <rect width="200" height="200" fill="url(#bg1)"/>
      <g filter="url(#b1)">
        <path d="M70 200 L78 166 L104 150 L134 128 L160 140 L190 150 L200 200 Z" fill="url(#str)"/>
        <path d="M104 150 L134 128 L128 160 L112 190 Z" fill="#e6d6c4"/>
        <path d="M86 130 L118 112 L122 150 L108 182 L96 160 Z" fill="#dcb098"/>
      </g>
      <!-- hair back -->
      <path filter="url(#curl)" transform="translate(-4,-4)" d="M40 38 C50 14 80 4 108 6 C142 4 168 22 178 48 C192 72 188 100 176 118 C166 134 146 142 128 138 C118 132 112 120 116 100 L110 60 L70 60 C62 80 64 100 56 114 C44 112 34 96 36 80 C30 62 34 48 40 38 Z" fill="#6a4128"/>
      <g filter="url(#b1)">
        <path d="M72 58 C84 44 108 46 116 64 C122 84 120 104 110 118 C100 134 90 142 82 140 C72 136 66 122 64 108 C60 98 62 80 72 58 Z" fill="#ecc9b2"/>
        <path d="M98 98 C108 94 116 100 112 114 C104 128 94 138 84 140 C92 126 96 112 98 98Z" fill="#d9ae96"/>
      </g>
      <!-- front curls over forehead -->
      <path filter="url(#curl)" transform="translate(-4,-4)" d="M56 44 C72 26 100 28 110 42 C120 52 118 64 112 70 C104 60 92 56 82 64 C74 72 70 84 68 94 C62 90 56 80 58 68 C54 58 54 50 56 44 Z" fill="#7a4c2e"/>
      <g filter="url(#b1s)">
        <path d="M88 72 Q100 64 114 72" stroke="#4a3020" stroke-width="2.2" fill="none"/>
        <path d="M90 81.500 Q100 75.500 111 81 Q100 87 90 81.500Z" fill="#efe6df"/><circle cx="100" cy="81" r="3.300" fill="#4e6a72"/><circle cx="100" cy="81" r="1.500" fill="#1d1a19"/><path d="M89.500 81.500 Q100 74.500 112 80.500" stroke="#2a1f1b" stroke-width="1.500" fill="none"/>
        <path d="M67 81 Q72 77 78 80.500 Q72 84 67 81Z" fill="#e9dfd8"/><circle cx="72.500" cy="80.500" r="2.600" fill="#4e6a72"/><path d="M66.500 81 Q72 76 78.500 80" stroke="#2a1f1b" stroke-width="1.400" fill="none"/><path d="M64 73 Q71 69 79 73" stroke="#4a3020" stroke-width="1.800" fill="none"/>
        <path d="M68 116 Q74 110 80 114 Q88 114 92 122 Q82 128 74 124 Q70 122 68 116Z" fill="#c93038"/>
        <path d="M72 96 Q70 102 76 104" stroke="#c9987e" stroke-width="1.5" fill="none"/>
      </g>
    </g>
  </svg>
  <!-- photo 2 : centre global (884,620) -> local (523,494) -->
  <svg class="abs" style="left:434px;top:405px" width="178" height="178" viewBox="0 0 178 178">
    <defs>
      <clipPath id="c2"><circle cx="89" cy="89" r="85"/></clipPath>
      <filter id="b2" x="-20%" y="-20%" width="140%" height="140%"><feGaussianBlur stdDeviation="1.3"/></filter>
      <filter id="b2s" x="-20%" y="-20%" width="140%" height="140%"><feGaussianBlur stdDeviation="0.7"/></filter>
      <filter id="strands" x="-5%" y="-5%" width="110%" height="110%" color-interpolation-filters="sRGB">
        <feTurbulence type="fractalNoise" baseFrequency="0.28 0.006" numOctaves="2" seed="11" result="n"/>
        <feColorMatrix in="n" type="matrix" values="0 0 0 0 0.16  0 0 0 0 0.08  0 0 0 0 0.04  2.4 0 0 0 -0.95" result="dk"/>
        <feColorMatrix in="n" type="matrix" values="0 0 0 0 0.80  0 0 0 0 0.58  0 0 0 0 0.38  0 -2.2 0 0 0.95" result="lt"/>
        <feComposite in="dk" in2="SourceGraphic" operator="in" result="dk2"/>
        <feComposite in="lt" in2="SourceGraphic" operator="in" result="lt2"/>
        <feMerge result="m"><feMergeNode in="SourceGraphic"/><feMergeNode in="lt2"/><feMergeNode in="dk2"/></feMerge>
        <feGaussianBlur in="m" stdDeviation="0.9"/>
      </filter>
      <linearGradient id="bg2" x1="0" y1="0" x2="1" y2="0"><stop offset="0" stop-color="#ab9062"/><stop offset=".35" stop-color="#9a7e52"/><stop offset="1" stop-color="#715a3a"/></linearGradient>
      <linearGradient id="hr2" x1="0" y1="0" x2="1" y2="0"><stop offset="0" stop-color="#6a4226"/><stop offset=".22" stop-color="#9a6c44"/><stop offset=".42" stop-color="#7c4e2e"/><stop offset=".75" stop-color="#5a3822"/><stop offset="1" stop-color="#47301e"/></linearGradient>
    </defs>
    <circle cx="89" cy="89" r="89" fill="#fbf6f1"/>
    <g clip-path="url(#c2)">
      <rect width="178" height="178" fill="url(#bg2)"/>
      <!-- hair -->
      <path filter="url(#strands)" transform="rotate(4 89 89)" d="M88 5 C64 6 52 16 47 28 C39 50 35 78 32 110 C31 140 33 165 35 185 L166 185 C171 150 172 120 168 96 C166 66 158 36 142 18 C128 8 106 4 88 5 Z" fill="url(#hr2)"/>
      <g filter="url(#b2)">
        <!-- face -->
        <path d="M96 40 C108 30 128 34 135 52 C141 72 141 96 134 116 C128 130 118 140 108 140 C98 138 90 126 88 104 C88 84 90 60 96 40 Z" fill="#e6c0a6"/>
        <path d="M122 108 C131 98 137 84 137 70 C143 92 139 116 127 132 C121 138 113 142 108 140 C114 132 119 120 122 108Z" fill="#c99a80"/>
        <!-- neck -->
        <path d="M102 138 C112 144 124 138 130 126 L134 162 L104 166 Z" fill="#d2a488"/>
        <path d="M112 140 C122 140 130 130 134 118 C142 130 146 160 144 180 L124 180 C126 165 122 150 112 140Z" fill="#4a2c1a"/>
      </g>
      <!-- fringe over face -->
      <path filter="url(#strands)" d="M90 7 C102 18 106 34 102 52 C98 74 90 92 89 112 C88 130 90 150 94 180 L60 180 C58 150 60 100 66 60 C70 36 78 18 90 7 Z" fill="#8a5a36"/>
      <g filter="url(#b2s)">
        <path d="M108 65 Q118 59 131 65" stroke="#5a3a26" stroke-width="2" fill="none"/>
        <path d="M110 72 Q119 67 129 72 Q119 77 110 72Z" fill="#3e3632"/>
        <circle cx="119.500" cy="72" r="2" fill="#20201f"/>
        <path d="M93 113 Q101 109 111 113 Q103 119 93 117Z" fill="#c47868"/>
        <path d="M99 84 Q95 97 103 100" stroke="#c49478" stroke-width="1.600" fill="none"/>
      </g>
    </g>
  </svg>

</div>
<div class="abs" style="left:21px;top:0;width:1.500px;height:563px;background:#fff"></div>
<svg class="abs" style="left:266.300px;top:141.500px" width="12" height="18" viewBox="0 0 12 18"><path d="M.8.800v13.400l3.100-2.900 2 4.800 2-.9-2-4.600h4.300Z" fill="#fff" stroke="#222" stroke-width=".9" stroke-linejoin="round"/></svg>
<svg class="reg" style="left:16.700px;top:291.700px" viewBox="0 0 11 11"><circle cx="5.500" cy="5.500" r="3.400" fill="none" stroke="#222" stroke-width="1"/><circle cx="5.500" cy="5.500" r="1.500" fill="#222"/><path d="M5.500 0v11M0 5.500h11" stroke="#222" stroke-width=".8"/></svg>
<svg class="reg" style="left:831.500px;top:291.700px" viewBox="0 0 11 11"><circle cx="5.500" cy="5.500" r="3.400" fill="none" stroke="#222" stroke-width="1"/><circle cx="5.500" cy="5.500" r="1.500" fill="#222"/><path d="M5.500 0v11M0 5.500h11" stroke="#222" stroke-width=".8"/></svg>
</div>
  <div id="vshadow"></div>
  <div id="scroll">
<svg class="abs" style="left:2.500px;top:2.500px" width="7" height="5" viewBox="0 0 7 5"><path d="M.6 4.300L3.500 1.200l2.900 3.100" fill="none" stroke="#505050" stroke-width="1.200"/></svg>
<div class="abs" style="left:1px;top:45.500px;width:10.500px;height:520px;background:#c1c1c1"></div>
</div>
  <div id="taskbar">
<div class="abs" style="left:275px;top:0;width:569px;height:2.400px;background:#f7f8fa"></div>
<div class="abs" style="left:0;top:1px;width:1150px;height:30px">
<div class="abs" style="left:156.5px;top:-1px;width:38.500px;height:31.300px;background:#f0666b"></div>
<svg class="abs" style="left:13.0px;top:8.5px" width="12" height="12" viewBox="0 0 12 12"><path d="M0 1.700L5 1v4.700H0ZM6 .85L12 0v5.700H6ZM0 6.500h5v4.700L0 10.500ZM6 6.500h6v5.500l-6-.85Z" fill="#1f2328"/></svg>
<svg class="abs" style="left:54.0px;top:8.0px" width="12.5" height="12.5" viewBox="0 0 12.5 12.5"><circle cx="7" cy="5.500" r="4.300" fill="none" stroke="#1f2328" stroke-width="1.200"/><path d="M4 8.700L.8 11.900" stroke="#1f2328" stroke-width="1.300"/></svg>
<svg class="abs" style="left:88.5px;top:9.0px" width="14" height="11" viewBox="0 0 14 11"><rect x="2.500" y="1.600" width="7.500" height="8" fill="none" stroke="#1f2328" stroke-width="1.100"/><path d="M.6 2.500v6.200M12.200 2.500v6.200M11 .8h2.500" stroke="#1f2328" stroke-width="1.100"/><circle cx="12.200" cy="5.500" r=".9" fill="#1f2328"/></svg>
<svg class="abs" style="left:130.5px;top:7.0px" width="16" height="14.5" viewBox="0 0 16 14.5"><path d="M.5 2h5.500l1.500 1.800H15.500V6H.5Z" fill="#f2b632"/><path d="M.5 5h15v8.500H.5Z" fill="#f8d775"/><path d="M2.500 8.500h11v5h-3v-2.500h-5v2.500h-3Z" fill="#3b8ad9"/></svg>
<svg class="abs" style="left:168.0px;top:6.5px" width="15" height="16" viewBox="0 0 15 16"><ellipse cx="7.500" cy="8" rx="7.500" ry="8" fill="#e8121d"/><ellipse cx="7.500" cy="8" rx="3" ry="5.500" fill="#f0646a"/></svg>
<svg class="abs" style="left:206.0px;top:6.5px" width="16" height="16" viewBox="0 0 16 16"><circle cx="8" cy="8" r="8" fill="#e33b2e"/><path d="M8 8L1.100 4A8 8 0 0 0 5.500 15.600Z" fill="#2da44f"/><path d="M8 8l-2.500 7.600A8 8 0 0 0 15.500 5.200L8 5Z" fill="#f7c325"/><path d="M8 8l7.500-2.800A8 8 0 0 0 1.100 4Z" fill="#e33b2e"/><circle cx="8" cy="8" r="3.700" fill="#f3f6fa"/><circle cx="8" cy="8" r="2.900" fill="#3f7fe0"/></svg>
<svg class="abs" style="left:246.0px;top:6.0px" width="18" height="17" viewBox="0 0 18 17"><ellipse cx="9" cy="6.500" rx="8" ry="5.500" fill="#f4f6f9" stroke="#c9ced6" stroke-width=".8"/><path d="M5 3.500l7 9M13 3.500l-7 9" stroke="#d44a3a" stroke-width="1.400"/><circle cx="5.500" cy="13.500" r="2" fill="none" stroke="#3b7fd0" stroke-width="1.300"/><circle cx="12.500" cy="13.500" r="2" fill="none" stroke="#3b7fd0" stroke-width="1.300"/></svg>
<svg class="abs" style="left:285.0px;top:6.5px" width="17" height="16" viewBox="0 0 17 16"><rect width="17" height="16" rx="1" fill="#a81c2a"/><path d="M2.500 8c2.500-3.500 9.500-3.500 12 0-2.500 3.500-9.500 3.500-12 0Z" fill="#fff"/><circle cx="9.500" cy="8" r="2.600" fill="#a81c2a"/></svg>
<svg class="abs" style="left:324.5px;top:7.0px" width="15.5" height="15" viewBox="0 0 15.5 15"><rect width="15.500" height="15" rx="2" fill="#2b0a00"/><text x="7.750" y="11" font-family="Liberation Sans" font-weight="bold" font-size="8.500" fill="#ff9a00" text-anchor="middle">Ai</text></svg>
<svg class="abs" style="left:362.5px;top:7.0px" width="15.5" height="15" viewBox="0 0 15.5 15"><rect width="15.500" height="15" rx="2" fill="#47001f"/><text x="7.750" y="11" font-family="Liberation Sans" font-weight="bold" font-size="8.500" fill="#ff3d7f" text-anchor="middle">Id</text></svg>
<svg class="abs" style="left:401.0px;top:7.0px" width="15.5" height="15" viewBox="0 0 15.5 15"><rect width="15.500" height="15" rx="2" fill="#001d33"/><text x="7.750" y="11" font-family="Liberation Sans" font-weight="bold" font-size="8.500" fill="#39a8ff" text-anchor="middle">Ps</text></svg>
<svg class="abs" style="left:440.5px;top:6.5px" width="17" height="16.5" viewBox="0 0 17 16.5"><circle cx="8.500" cy="8.250" r="8.200" fill="#16181a"/><path d="M4 3.500l8.500 4.500-3 1.200 2.500 4-1.500 1-2.500-4-2.500 2Z" fill="#f2f2f2"/><path d="M4 12c2 2 6 2.500 9 0" stroke="#8ac43f" stroke-width="1.500" fill="none"/></svg>
<svg class="abs" style="left:479.5px;top:6.0px" width="18" height="17.5" viewBox="0 0 18 17.5"><circle cx="8" cy="8" r="7.800" fill="#2fa3df"/><path d="M3.200 7.800l9-3.600-1.500 8-3-2.200-1.500 1.500-.3-2.500 4.500-3.800-5.500 3.300Z" fill="#fff"/><rect x="8.500" y="10.500" width="9.500" height="6.500" rx="1.500" fill="#8d9199"/><text x="13.250" y="15.800" font-family="Liberation Sans" font-size="5.500" fill="#fff" text-anchor="middle">32</text></svg>
<svg class="abs" style="left:518.5px;top:6.5px" width="17" height="16" viewBox="0 0 17 16"><rect x="4" y=".5" width="12.500" height="15" fill="#fff" stroke="#9aa7bd" stroke-width=".8"/><path d="M6 3.500h9M6 6h9M6 8.500h9M6 11h9" stroke="#6b86b8" stroke-width=".9"/><rect x="0" y="3.500" width="9.500" height="9" fill="#2b579a"/><text x="4.750" y="10.600" font-family="Liberation Sans" font-weight="bold" font-size="7.500" fill="#fff" text-anchor="middle">W</text></svg>
<svg class="abs" style="left:558.5px;top:6.5px" width="17" height="16" viewBox="0 0 17 16"><rect width="17" height="16" rx="3.500" fill="#2d8cff"/><rect x="3" y="5" width="7.500" height="6" rx="1.200" fill="#fff"/><path d="M11 7.200l3-2v5.600l-3-2Z" fill="#fff"/></svg>
<svg class="abs" style="left:596.5px;top:6.5px" width="17" height="16" viewBox="0 0 17 16"><rect x="4" y=".5" width="12.500" height="15" fill="#fff" stroke="#9abf9f" stroke-width=".8"/><path d="M6 3.500h9M6 6h9M6 8.500h9M6 11h9M10.500 1v14" stroke="#7fb58a" stroke-width=".9"/><rect x="0" y="3.500" width="9.500" height="9" fill="#1e7145"/><text x="4.750" y="10.600" font-family="Liberation Sans" font-weight="bold" font-size="7.500" fill="#fff" text-anchor="middle">X</text></svg>
<svg class="abs" style="left:935.0px;top:11.5px" width="10" height="6" viewBox="0 0 10 6"><path d="M.7 5.300L5 1l4.300 4.300" fill="none" stroke="#1f2328" stroke-width="1.200"/></svg>
<svg class="abs" style="left:954.5px;top:7.5px" width="11" height="14" viewBox="0 0 11 14"><rect x="1.500" y="3" width="7" height="8" rx="1" fill="none" stroke="#1f2328" stroke-width="1.100"/><circle cx="5" cy="7" r="1.500" fill="#1f2328"/><path d="M3 .8h4M3 13.200h4M9 5.500l1.500-.8v4.600L9 8.500" stroke="#1f2328" stroke-width="1" fill="none"/></svg>
<svg class="abs" style="left:973.5px;top:7.0px" width="9" height="14.5" viewBox="0 0 9 14.5"><rect x="2.500" y=".5" width="4" height="8" rx="2" fill="#1f2328"/><path d="M.8 6.500a3.700 3.700 0 0 0 7.400 0M4.500 10.200v3M2.500 13.700h4" fill="none" stroke="#1f2328" stroke-width="1.100"/></svg>
<svg class="abs" style="left:991.0px;top:8.5px" width="13" height="12" viewBox="0 0 13 12"><g fill="none" stroke="#1f2328" stroke-width="1.2"><path d="M.8 10.500A10.500 10.500 0 0 1 11.300 .8" opacity=".55"/><path d="M3.800 10.500A7.500 7.500 0 0 1 11.300 3.300" opacity=".7"/><path d="M6.800 10.500a4.500 4.500 0 0 1 4.500-4.300"/></g><circle cx="10.800" cy="10.300" r="1.300" fill="#1f2328"/></svg>
<svg class="abs" style="left:1009.0px;top:8.5px" width="14" height="12" viewBox="0 0 14 12"><path d="M.6 4h2.400L6.500.8v10.400L3 8H.6Z" fill="none" stroke="#1f2328" stroke-width="1.100" stroke-linejoin="round"/><path d="M8.500 3.800a3 3 0 0 1 0 4.400M10.300 2a5.600 5.600 0 0 1 0 8M12 .5a8 8 0 0 1 0 11" fill="none" stroke="#1f2328" stroke-width="1"/></svg>
<div class="abs" style="left:1029.0px;top:7.500px;font-size:11px;line-height:13px;color:#1f2328">Р</div>
</div>
</div>

<div class="abs" style="left:67.300px;top:697.200px;width:115px;height:19.500px;border-radius:3.500px;background:rgba(60,60,62,.6);color:#fff;font-size:12px;line-height:21px;padding-left:6.300px;white-space:nowrap;letter-spacing:-.51px;z-index:20;overflow:hidden">Валентина Повелко</div>
<!-- webcam : global (1102,584)-(1274,713) -->
<svg class="abs" style="left:1102px;top:584px;z-index:20" width="172" height="129" viewBox="0 0 172 129">
  <defs>
    <clipPath id="wc"><rect width="172" height="129" rx="5.500"/></clipPath>
    <filter id="wb" x="-10%" y="-10%" width="120%" height="120%"><feGaussianBlur stdDeviation="1.500"/></filter>
    <filter id="wb2" x="-10%" y="-10%" width="120%" height="120%"><feGaussianBlur stdDeviation="2.500"/></filter>
    <linearGradient id="wbg" x1="0" y1="0" x2="1" y2="0">
      <stop offset="0" stop-color="#f1f4fa"/><stop offset=".1" stop-color="#e2e8f2"/><stop offset=".18" stop-color="#f5f7fb"/><stop offset=".3" stop-color="#e6ebf5"/>
      <stop offset=".68" stop-color="#eef2f9"/><stop offset=".76" stop-color="#dde4f0"/><stop offset=".84" stop-color="#f4f6fb"/><stop offset=".92" stop-color="#dfe5f0"/><stop offset="1" stop-color="#f3f6fb"/>
    </linearGradient>
    <radialGradient id="wface" cx=".5" cy=".45" r=".6"><stop offset="0" stop-color="#d6b0a2"/><stop offset=".7" stop-color="#caa092"/><stop offset="1" stop-color="#b88c7e"/></radialGradient>
  </defs>
  <g clip-path="url(#wc)">
    <rect width="172" height="129" fill="url(#wbg)"/>
    <g filter="url(#wb2)">
      <path d="M116 68c10 2 20 14 28 36l12 25h-42Z" fill="#24262c"/>
    </g>
    <g filter="url(#wb)">
      <!-- hair -->
      <path d="M76 4c-12 0-22 5-28 14-7 10-9 22-12 36-2 12-1 22-4 30-2 6-8 8-14 12l30 20h72l10-20c-3-8-5-18-7-30-2-16-4-30-12-42C103 12 92 4 76 4Z" fill="#2b2123"/>
      <!-- face -->
      <path d="M49 48c1-14 12-24 27-24s28 10 30 24c2 14 0 28-6 38-6 9-14 14-22 14s-16-5-22-14c-6-10-8-24-7-38Z" fill="url(#wface)"/>
      <!-- parting hair sides -->
      <path d="M76 22c-10 2-20 8-24 20-2 6-3 12-3 20-5-10-6-26 0-38 6-10 16-14 27-12Z" fill="#2b2123"/>
      <path d="M76 22c12 0 24 8 28 20 2 8 3 14 2 22 6-12 6-28-2-38-6-8-16-10-28-4Z" fill="#2b2123"/>
      <path d="M62 88c6 7 24 7 30 0-2 8-8 12-15 12s-12-4-15-12Z" fill="#b78b7d"/>
      <!-- body -->
      <path d="M0 106c10-8 20-12 34-16 10 8 24 12 42 12s34-4 46-12c16 6 30 16 42 28l8 11H0Z" fill="#1b1a1d"/>
      <path d="M56 96c6 6 13 9 21 9s15-3 21-9l8 33H48Z" fill="#1b1a1d"/>
    </g>
    <g filter="url(#wb)" opacity=".95">
      <rect x="48.500" y="51.500" width="25" height="15" rx="5" fill="rgba(110,70,85,.28)" stroke="#2b1d24" stroke-width="1.700"/>
      <rect x="81" y="51.500" width="25.500" height="15" rx="5" fill="rgba(110,70,85,.28)" stroke="#2b1d24" stroke-width="1.700"/>
      <path d="M73.500 57h7.500" stroke="#2b1d24" stroke-width="1.500"/>
      <path d="M54 58q6-3 12 0M88 58q6-3 12 0" stroke="#3a2a2a" stroke-width="1.300" fill="none"/>
      <path d="M67 84q10 4 20 0" stroke="#9a5a5a" stroke-width="1.700" fill="none"/>
      <path d="M75 66q-3 8 3 10" stroke="#a87868" stroke-width="1.300" fill="none"/>
    </g>
  </g>
</svg>

</div>
</body>
</html>
